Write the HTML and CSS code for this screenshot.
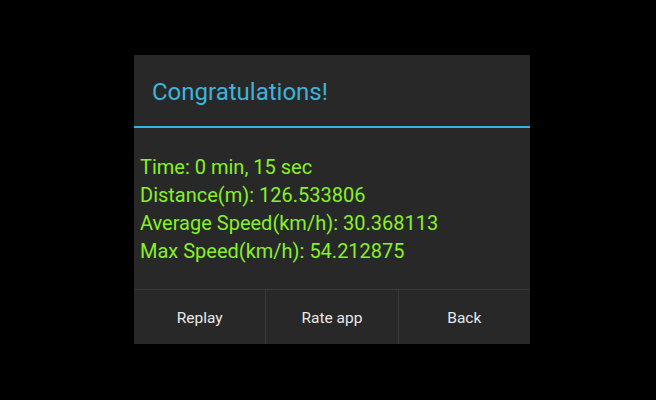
FILE: index.html
```html
<!DOCTYPE html>
<html lang="en">
<head>
    <meta charset="UTF-8">
    <meta name="viewport" content="width=device-width, initial-scale=1.0">
    <title>Congratulations</title>
    <link rel="stylesheet" href="styles.css">
</head>
<body>
    <div class="dialog">
        <div class="dialog-title">Congratulations!</div>
        <div class="dialog-body">
            <span>Time: 0 min, 15 sec</span>
            <span>Distance(m): 126.533806</span>
            <span>Average Speed(km/h): 30.368113</span>
            <span>Max Speed(km/h): 54.212875</span>
        </div>
        <div class="dialog-buttons">
            <button>Replay</button>
            <button>Rate app</button>
            <button>Back</button>
        </div>
    </div>
</body>
</html>
```

FILE: styles.css
```css
*{
    margin: 0;padding: 0;
    box-sizing: border-box
}
body{
    background: #000;
    padding: 55px 0 0 134px;
    font-family: Roboto, "Liberation Sans", sans-serif
}
.dialog{
    width: 396px;
    height: 289px;
    background: #282828;
    display: flex;
    flex-direction: column
}
.dialog-title{
    height: 73px;
    padding: 3px 18px 0;
    display: flex;
    align-items: center;
    color: #3cb4dc;
    font-size: 24px;
    border-bottom: 2px solid #33b5e5
}
.dialog-body{
    flex: 1;
    display: flex;
    flex-direction: column;
    padding: 25px 6px 0;
    color: #86f028;
    font-size: 20px;
    line-height: 28px
}
.dialog-buttons{
    display: flex;
    height: 55px;
    border-top: 1px solid #3a3a3a
}
.dialog-buttons button{
    flex: 1;
    background: #282828;
    color: #e8e8e8;
    border: none;
    border-left: 1px solid #3a3a3a;
    font-family: Roboto, "Liberation Sans", sans-serif;
    font-size: 15.5px;
    padding-top: 2px
}
.dialog-buttons button:first-child{
    border-left: none
}
```
